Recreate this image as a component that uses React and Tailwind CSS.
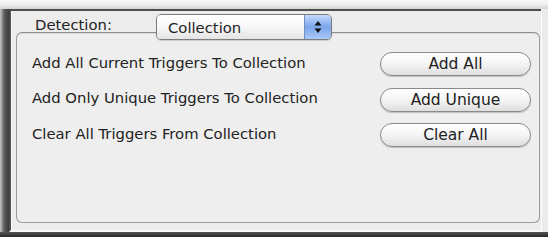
export default function App() {
  const rows = [
    { label: "Add All Current Triggers To Collection", btn: "Add All" },
    { label: "Add Only Unique Triggers To Collection", btn: "Add Unique" },
    { label: "Clear All Triggers From Collection", btn: "Clear All" },
  ];
  return (
    <div className="w-[548px] h-[237px] overflow-hidden flex flex-col bg-[#ececec] font-['DejaVu_Sans',sans-serif] text-[#222222]">
      <div className="h-[9px] shrink-0 bg-gradient-to-b from-[#f6f6f6] via-[#eeeeee] to-[#d4d4d4]" />
      <div className="flex flex-1 min-h-0">
        <div className="w-[9px] shrink-0 bg-gradient-to-r from-[#c8c8c8] via-[#5a5a5a] to-[#3c3c3c]" />
        <div className="flex-1 flex flex-col border-l-2 border-t-2 border-[#4e4e4e] bg-[#ececec] border-b-2 border-b-[#fafafa]">
          <div className="flex-1 flex flex-col border-l border-l-[#fbfbfb] pl-[4px] pt-[3px]">
            {/* header */}
            <div className="relative z-10 flex items-start h-[26px]">
              <div className="ml-[19px] mt-[2px] w-[121px] text-[14.8px] leading-[18px]">Detection:</div>
              <div className="flex h-[26px] w-[176px] rounded-[5px] border border-[#7c7c7c] overflow-hidden shadow-[0_1px_1px_rgba(0,0,0,0.15)]">
                <div className="flex-1 flex items-center pl-[11px] pt-[2px] text-[14.8px] bg-gradient-to-b from-[#ffffff] via-[#f7f7f7] to-[#e4e4e4]">
                  Collection
                </div>
                <div className="w-[27px] flex items-center justify-center border-l border-[#6f8fc0] bg-gradient-to-b from-[#c4dafb] via-[#7aa6ea] to-[#a9c9f6]">
                  <svg width="8" height="14" viewBox="0 0 8 14">
                    <path d="M4 1 L7.5 5.5 L0.5 5.5 Z" fill="#111" />
                    <path d="M4 13 L7.5 8.5 L0.5 8.5 Z" fill="#111" />
                  </svg>
                </div>
              </div>
            </div>
            {/* group box */}
            <div className="-mt-[8px] mr-[1px] mb-[7px] flex-1 rounded-[6px] border border-[#9c9c9c] border-t-[#8e8e8e] bg-[#eeeeee] shadow-[inset_0_1px_0_#d8d8d8] flex flex-col pt-[19px] pl-[15px] pr-[8px] gap-[11.5px]">
              {rows.map((r) => (
                <div key={r.btn} className="flex items-center justify-between h-[24px]">
                  <div className="text-[14.8px] leading-[18px] -mt-[3px]">{r.label}</div>
                  <button className="w-[151px] h-[24px] rounded-full border border-[#8a8a8a] bg-gradient-to-b from-[#ffffff] via-[#f4f4f4] to-[#dedede] shadow-[0_1px_1px_rgba(0,0,0,0.2)] text-[15.5px] leading-[18px] text-[#222222] flex items-center justify-center">
                    {r.btn}
                  </button>
                </div>
              ))}
            </div>
          </div>
        </div>
        <div className="w-[7px] shrink-0 bg-[#ebebeb] border-l border-[#fdfdfd]" />
      </div>
      <div className="h-[5px] shrink-0 bg-gradient-to-b from-[#555555] to-[#2a2a2a]" />
    </div>
  );
}
